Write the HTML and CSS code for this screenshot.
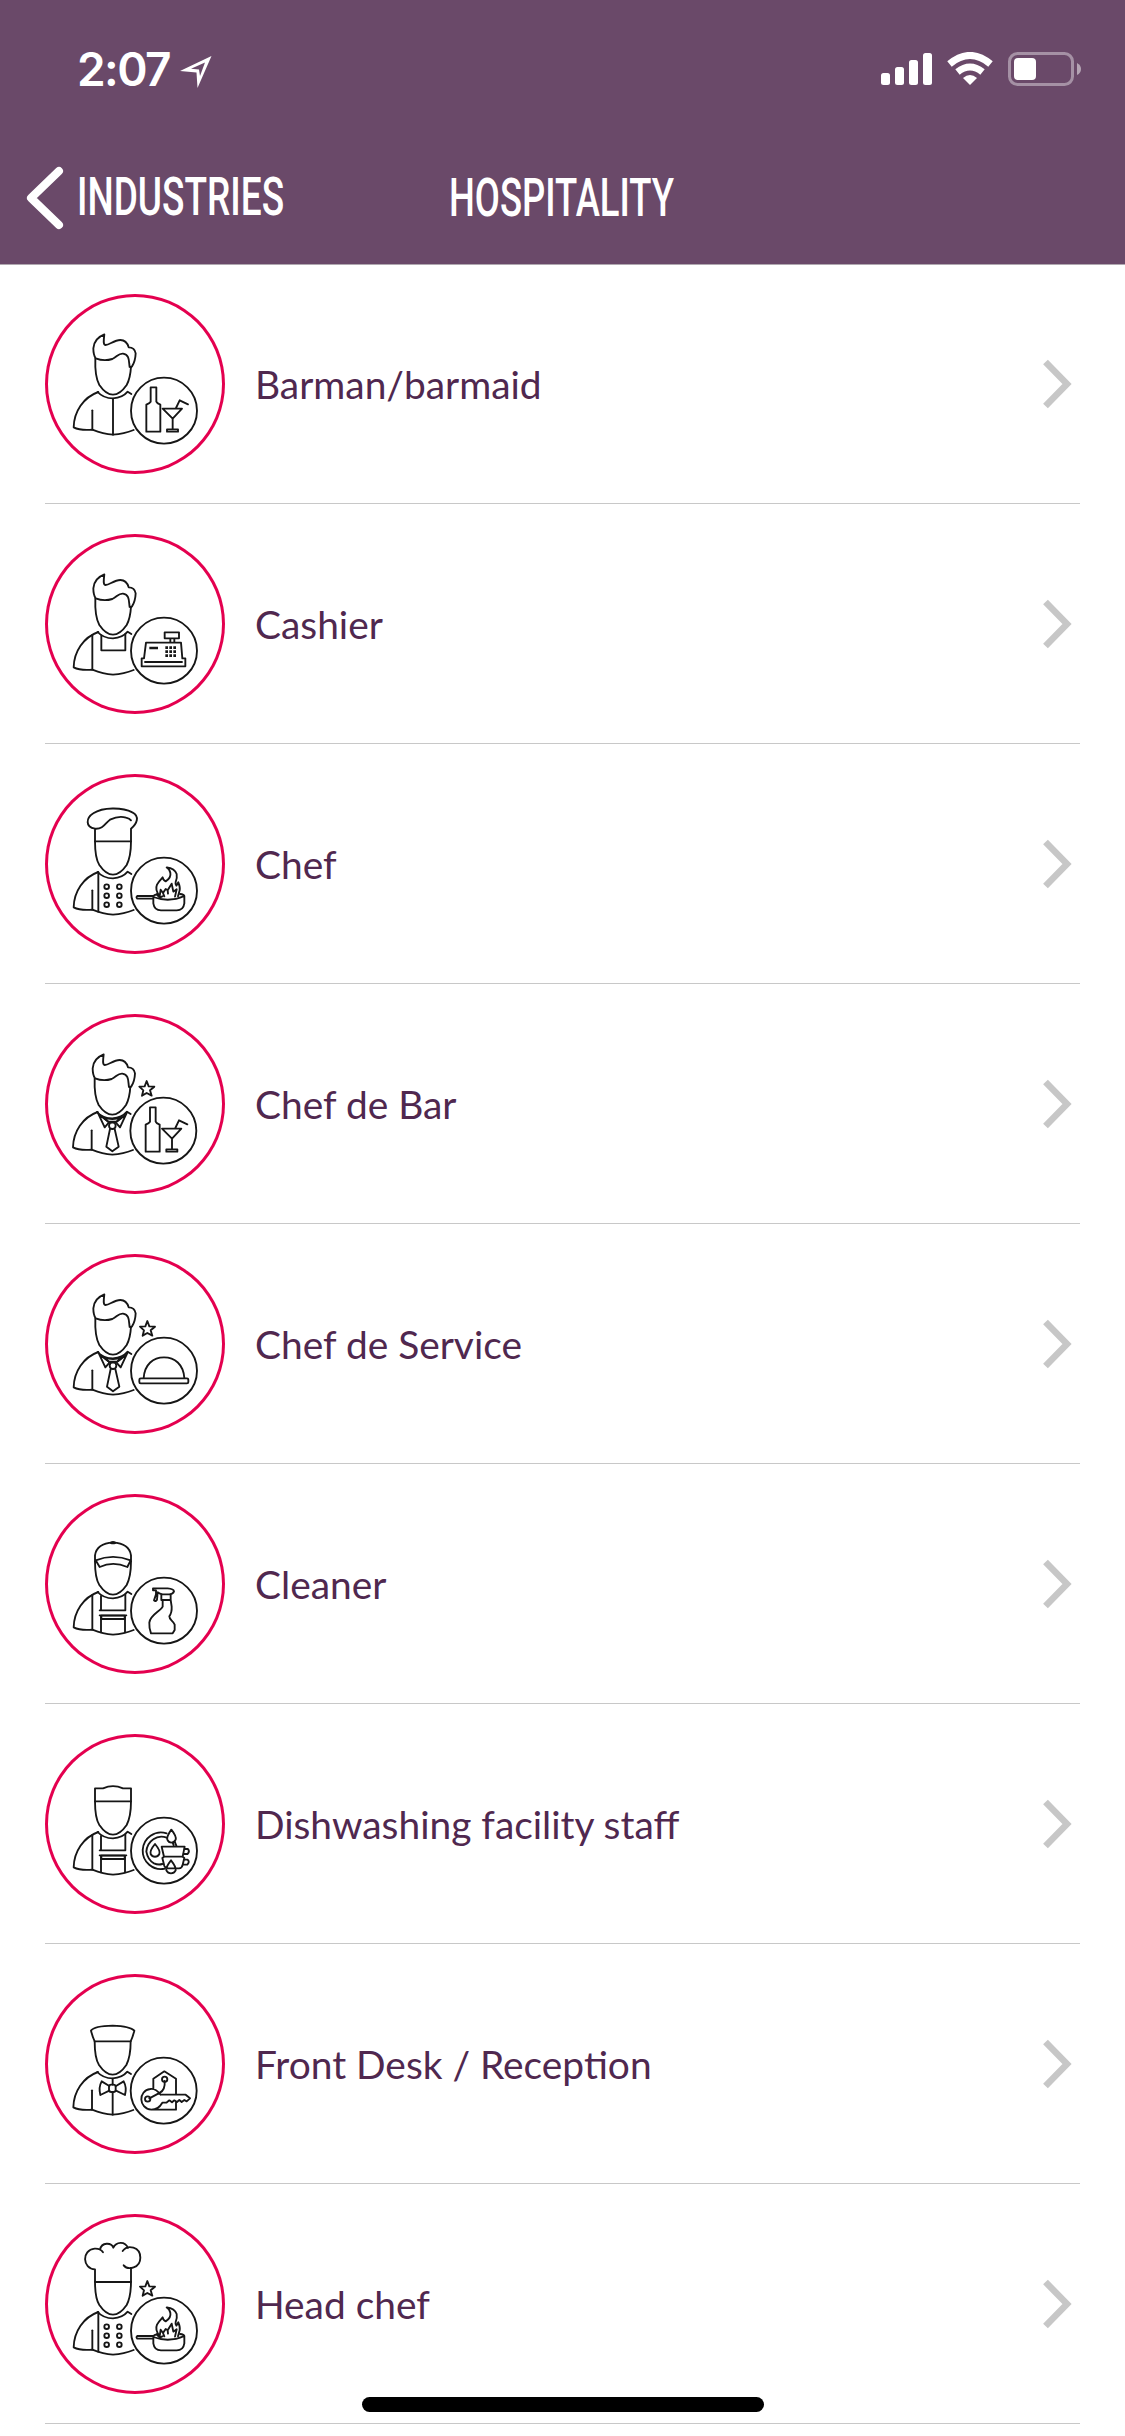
FILE: index.html
```html
<!DOCTYPE html>
<html lang="en">
<head>
<meta charset="utf-8">
<title>Hospitality</title>
<link rel="stylesheet" href="styles.css">
</head>
<body>
<svg class="defs" width="0" height="0" aria-hidden="true">
  <defs>
    <g id="torso">
      <path d="M205 336C160 352 132 395 131 442Q150 452 187 449Q220 462 249 464Q282 462 311 450"/>
      <path d="M203 336Q220 355 249 355Q278 353 293 335L304 342"/>
    </g>
    <path id="face" d="M196 235Q194 290 208 315Q228 344 249 344Q270 344 290 315Q301 295 303 260"/>
    <path id="capface" d="M195 244Q195 295 208 315Q228 344 249 344Q270 344 290 315Q303 290 303 244"/>
    <g id="hair">
      <use href="#face"/>
      <path d="M223 163Q192 175 190 205Q190 225 197 235Q222 245 247 237C262 230 265 220 279 221C300 224 296 245 299 261Q303 263 306 259Q316 245 317 220Q314 202 296 202C292 188 283 180 271 180C252 180 237 196 226 195C219 194 221 180 223 163Z"/>
    </g>
    <circle id="badge" cx="402" cy="392" r="99"/>
    <path id="sleeve" d="M187 391V449"/>
    <g id="drinks">
      <path d="M362 322H379V365Q381 370 391 374V455H349V374Q359 370 362 365ZM398 386H456L428 416ZM428 416V447M411 448H444V455H411ZM438 384L449 361L474 373"/>
    </g>
    <g id="pan">
      <path d="M370 408H322Q317 412 322 416H370M370 408V430Q373 451 393 451H440Q460 451 463 430V408Q417 429 370 411Q370 405 380 403M463 408Q462 403 450 402"/>
      <path d="M389 408Q374 390 381 374Q386 365 398 352Q400 362 407 364Q424 354 421 338Q418 326 410 322Q434 325 440 342Q442 352 437 366Q435 373 439 377L445 367Q451 382 449 391L444 409M389 408L392 389L399 399L407 387L413 391L425 371L430 395L440 388L435 410M399 399L403 409M413 391L414 401M380 403L389 413L397 409"/>
    </g>
    <path id="star" d="M352 243L358 259L375 260L362 271L367 287L352 279L338 287L342 271L330 260L346 259Z"/>
    <g id="tie">
      <path d="M205 337L226 382L239 367M293 337L272 382L259 367M211 345L239 367H260L288 345"/>
      <path class="shade" d="M221 352Q249 362 277 352L261 365H237Z"/>
      <circle cx="249" cy="377" r="10"/>
      <path d="M242 387L231 440L249 454L268 440L256 387"/>
    </g>
    <g id="buttons" class="solid">
      <circle cx="230" cy="380" r="7"/><circle cx="268" cy="380" r="7"/>
      <circle cx="230" cy="407" r="7"/><circle cx="268" cy="407" r="7"/>
      <circle cx="230" cy="434" r="7"/><circle cx="268" cy="434" r="7"/>
    </g>
    <g id="overalls">
      <path d="M187 345V449M213 348V391H286V343M209 406H289M213 406V457M285 406V457M209 391H213"/>
      <path class="shade" d="M214 407H284V417H214Z"/>
    </g>
  </defs>
</svg>

<header class="header">
  <div class="status">
    <div class="clock">
      <span class="time">2:07</span>
      <svg class="location" width="34" height="34" viewBox="0 0 34 34"><path fill="#fff" fill-rule="evenodd" d="M32.500 1L18.500 33L17.500 17.500L1 16ZM26 7.500L12 13.700L20 14.500L21 21Z"/></svg>
    </div>
    <svg class="signals" width="202" height="36" viewBox="0 0 202 36">
      <g fill="#fff">
        <rect x="1" y="21" width="9" height="12" rx="2.5"/><rect x="15" y="15" width="9" height="18" rx="2.5"/>
        <rect x="29" y="8" width="9" height="25" rx="2.5"/><rect x="43" y="1" width="9" height="32" rx="2.5"/>
        <path d="M83 26Q90 20 97 26L90 33Z"/>
        <rect x="134" y="6" width="22" height="22" rx="4"/>
      </g>
      <g fill="none" stroke="#fff" stroke-width="7"><path d="M69.500 12Q90 -5 110.500 12M77.500 20Q90 10 102.500 20"/></g>
      <rect x="129.500" y="1.500" width="63" height="31" rx="8" fill="none" stroke="#fff" stroke-opacity=".4" stroke-width="3"/>
      <path d="M197 11Q201 13 201 17Q201 21 197 23Z" fill="#fff" fill-opacity=".5"/>
    </svg>
  </div>
  <nav class="nav">
    <a class="back">
      <svg width="38" height="64" viewBox="0 0 38 64"><path d="M33 5L5 32L33 59" fill="none" stroke="#fff" stroke-width="8" stroke-linecap="round" stroke-linejoin="round"/></svg>
      <span class="back-label">INDUSTRIES</span>
    </a>
    <h1 class="title">HOSPITALITY</h1>
  </nav>
</header>

<main class="list">
  <div class="row">
    <svg class="avatar" viewBox="45 42 540 540"><use href="#hair"/><use href="#torso"/><use href="#sleeve"/><path d="M249 356V464"/><use href="#badge"/><use href="#drinks"/></svg>
    <span class="label">Barman/barmaid</span><svg class="chevron" viewBox="0 0 30 50"><path d="M3.500 3L25 25L3.500 47"/></svg>
  </div>
  <div class="row">
    <svg class="avatar" viewBox="45 42 540 540"><use href="#hair"/><use href="#torso"/><path d="M187 345V449M214 346V391H286V342"/><use href="#badge"/>
      <path d="M348 368H453L457 415H466V439H335V415H342ZM345 426H456M404 337H447V355H404ZM421 356V367M433 356V367"/><path class="thick" d="M358 384H384"/><g class="solid"><path d="M406 379h8v8h-8zm12 0h8v8h-8zm12 0h8v8h-8zM406 391h8v8h-8zm12 0h8v8h-8zm12 0h8v8h-8zM406 403h8v8h-8zm12 0h8v8h-8zm12 0h8v8h-8z"/></g></svg>
    <span class="label">Cashier</span><svg class="chevron" viewBox="0 0 30 50"><path d="M3.500 3L25 25L3.500 47"/></svg>
  </div>
  <div class="row">
    <svg class="avatar" viewBox="45 42 540 540"><use href="#capface"/><path d="M195 244V206M303 244V206M195 244H303M195 206C165 201 168 174 190 160C218 141 277 141 307 157C331 169 320 192 303 206M195 206C220 208 226 189 240 179Q267 166 288 173Q299 176 303 181"/><use href="#torso"/><use href="#sleeve"/><path d="M205 337V455"/><use href="#buttons"/><use href="#badge"/><use href="#pan"/></svg>
    <span class="label">Chef</span><svg class="chevron" viewBox="0 0 30 50"><path d="M3.500 3L25 25L3.500 47"/></svg>
  </div>
  <div class="row">
    <svg class="avatar" viewBox="45 42 540 540"><g transform="translate(-2 0)"><use href="#hair"/><use href="#torso"/><use href="#sleeve"/><use href="#tie"/><use href="#star"/><use href="#badge"/><use href="#drinks"/></g></svg>
    <span class="label">Chef de Bar</span><svg class="chevron" viewBox="0 0 30 50"><path d="M3.500 3L25 25L3.500 47"/></svg>
  </div>
  <div class="row">
    <svg class="avatar" viewBox="45 42 540 540"><use href="#hair"/><use href="#torso"/><use href="#sleeve"/><use href="#tie"/><use href="#star"/><use href="#badge"/><path d="M341 414C344 373 370 352 402 352C434 352 460 373 463 414"/><rect x="328" y="415" width="147" height="15" rx="4"/></svg>
    <span class="label">Chef de Service</span><svg class="chevron" viewBox="0 0 30 50"><path d="M3.500 3L25 25L3.500 47"/></svg>
  </div>
  <div class="row">
    <svg class="avatar" viewBox="45 42 540 540"><use href="#capface"/><path d="M195 244V226C199 200 220 189 249 188C278 189 299 200 303 226V244M197 241Q249 220 302 241L292 261Q249 242 209 261Z"/><ellipse class="solid" cx="249" cy="188" rx="9" ry="5"/><use href="#torso"/><use href="#overalls"/><use href="#badge"/>
      <path d="M369 325H413Q431 326 432 334Q429 342 418 343H398Q389 342 383 337L381 359Q377 366 372 361L378 343V331H369ZM394 344V360H422V344M398 360V380C390 395 360 405 358 428Q357 445 363 460H428L434 450V434C428 420 418 420 418 409Q426 398 425 380L422 360"/></svg>
    <span class="label">Cleaner</span><svg class="chevron" viewBox="0 0 30 50"><path d="M3.500 3L25 25L3.500 47"/></svg>
  </div>
  <div class="row">
    <svg class="avatar" viewBox="45 42 540 540"><use href="#capface"/><path d="M195 244V205H219Q249 192 279 205H303V244ZM195 244H303"/><use href="#torso"/><use href="#overalls"/><use href="#badge"/>
      <path d="M410 340A55 55 0 1 0 405 446M410 353Q388 345 370 358Q351 371 349 395Q354 421 372 430Q385 436 397 432M433 362L440 380M428 367L431 376"/>
      <g class="paper"><path d="M424 329Q440 349 437 359C431 371 417 371 412 359Q409 350 424 329ZM375 372Q392 392 388 402C382 413 368 413 362 402Q359 391 375 372ZM395 380H464L458 410H402ZM402 410L397 414L403 438Q406 445 416 445H447Q456 445 458 434L463 414L458 410ZM423 421Q439 441 437 451C431 463 415 463 409 451Q407 441 423 421Z"/></g>
      <path d="M464 387H474Q480 394 473 402H461M463 419H473Q480 425 472 434H459"/></svg>
    <span class="label">Dishwashing facility staff</span><svg class="chevron" viewBox="0 0 30 50"><path d="M3.500 3L25 25L3.500 47"/></svg>
  </div>
  <div class="row">
    <svg class="avatar" viewBox="45 42 540 540"><g transform="translate(-1 0)"><use href="#capface"/><path d="M195 244Q189 232 184 212Q194 198 249 197Q302 199 314 212Q309 232 303 244ZM195 244H303"/><use href="#torso"/><use href="#sleeve"/><path d="M249 356V374M249 396V464M239 378L216 364Q206 382 212 405L239 392M259 378L282 364Q292 382 286 405L259 392"/><rect x="238" y="374" width="20" height="22" rx="7"/><use href="#badge"/>
      <path d="M371 387V356L404 334L439 356V403M439 424V449H362M393 404H468L481 415L471 424L464 420L456 426L449 420L442 426L434 421L427 427L419 421L410 428H398Q386 449 365 449C326 445 325 392 362 387Q377 384 393 404M405 363Q407 389 391 398Q377 406 359 415"/><circle cx="405" cy="358" r="8"/><circle cx="354" cy="417" r="8"/></g></svg>
    <span class="label">Front Desk / Reception</span><svg class="chevron" viewBox="0 0 30 50"><path d="M3.500 3L25 25L3.500 47"/></svg>
  </div>
  <div class="row">
    <svg class="avatar" viewBox="45 42 540 540"><use href="#capface"/><path d="M195 244V208C157 206 154 150 194 146Q211 145 219 157M210 149C215 126 244 127 250 143C258 125 285 122 294 144M278 153C293 132 331 141 331 173C331 204 294 212 281 196M303 204V246M195 246H303"/><use href="#torso"/><use href="#sleeve"/><path d="M205 337V455"/><use href="#buttons"/><use href="#star"/><use href="#badge"/><use href="#pan"/></svg>
    <span class="label">Head chef</span><svg class="chevron" viewBox="0 0 30 50"><path d="M3.500 3L25 25L3.500 47"/></svg>
  </div>
</main>
<div class="home-indicator"></div>
</body>
</html>
```
FILE: styles.css
```css
* { box-sizing: border-box; }
body {
  margin: 0;
  width: 1125px;
  height: 2436px;
  overflow: hidden;
  background: #fff;
  font-family: Lato, "Open Sans", sans-serif;
}
.defs { position: absolute; }
.header {
  height: 265px;
  background: #6a4969;
  border-bottom: 1px solid #b0a8b0;
  color: #fff;
}
.status {
  height: 132px;
  display: flex;
  justify-content: space-between;
  align-items: flex-start;
  padding: 40px 43px 0 77px;
}
.clock { display: flex; align-items: center; gap: 10px; height: 58px; }
.time {
  font: 600 46px/58px Inter, sans-serif;
  letter-spacing: -1.6px;
  width: 92px;
  white-space: nowrap;
}
.location { margin-top: 6px; }
.signals { margin-top: 12px; }
.nav {
  height: 132px;
  display: grid;
  grid-template-columns: 1fr 227px 1fr;
  align-items: center;
}
.back { display: flex; align-items: center; gap: 13px; padding-left: 26px; }
.back-label, .title {
  margin: 0;
  font: 500 54px/64px Roboto, sans-serif;
  white-space: nowrap;
  transform-origin: left center;
}
.back-label { transform: translateY(-1px) scaleX(.685); }
.title { transform: scaleX(.675); }
.row {
  height: 240px;
  margin: 0 45px;
  display: flex;
  align-items: center;
  border-bottom: 1px solid #c8c8c8;
}
.list { margin-top: -1px; }
.avatar {
  width: 180px;
  height: 180px;
  flex: none;
  border-radius: 50%;
  box-shadow: inset 0 0 0 3px #e4004f;
  fill: none;
  stroke: #161616;
  stroke-width: 5.6;
  stroke-linejoin: round;
  stroke-linecap: round;
}
.avatar .solid { fill: #161616; stroke: none; }
.avatar .shade { fill: #bdbdbd; }
.avatar .paper { fill: #fff; }
.avatar .thick { stroke-width: 8; stroke-linecap: butt; }
.label {
  flex: 1;
  margin-left: 30px;
  font-size: 38.9px;
  line-height: 50px;
  color: #50284f;
}
.chevron {
  width: 30px;
  height: 50px;
  margin-right: 8px;
  fill: none;
  stroke: #c7c7c7;
  stroke-width: 6.6;
}
.home-indicator {
  position: absolute;
  left: 362px;
  top: 2397px;
  width: 402px;
  height: 15px;
  border-radius: 8px;
  background: #000;
}
```
